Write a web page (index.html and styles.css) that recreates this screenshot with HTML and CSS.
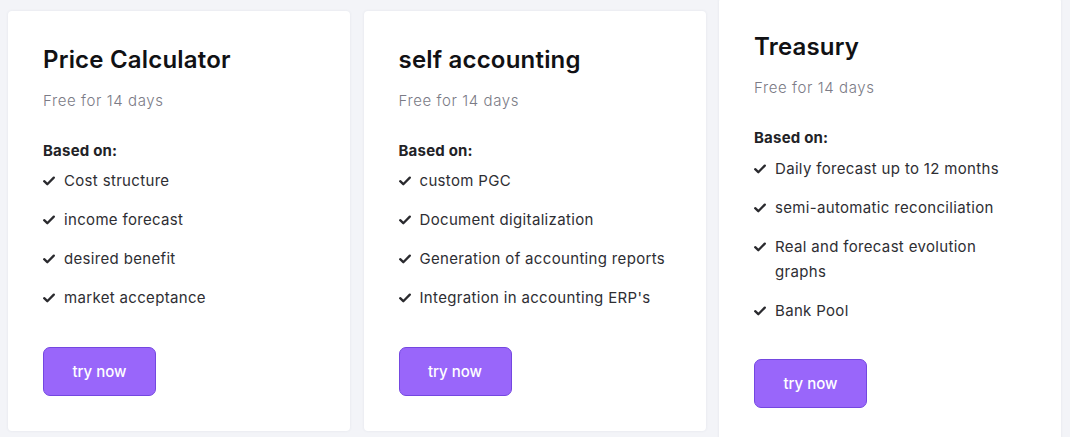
FILE: index.html
```html
<!DOCTYPE html>
<html>
<head>
<meta charset="utf-8">
<link rel="stylesheet" href="styles.css">
</head>
<body>
<div class="plans">
  <div class="card">
    <h2 class="title">Price Calculator</h2>
    <p class="sub">Free for 14 days</p>
    <p class="based">Based on:</p>
    <ul class="list">
      <li><svg class="chk" viewBox="0 0 12 10"><path d="M1.2 5.2 L4.3 8.2 L10.8 1.6"/></svg><span>Cost structure</span></li>
      <li><svg class="chk" viewBox="0 0 12 10"><path d="M1.2 5.2 L4.3 8.2 L10.8 1.6"/></svg><span>income forecast</span></li>
      <li><svg class="chk" viewBox="0 0 12 10"><path d="M1.2 5.2 L4.3 8.2 L10.8 1.6"/></svg><span>desired benefit</span></li>
      <li><svg class="chk" viewBox="0 0 12 10"><path d="M1.2 5.2 L4.3 8.2 L10.8 1.6"/></svg><span>market acceptance</span></li>
    </ul>
    <button class="btn">try now</button>
  </div>
  <div class="card">
    <h2 class="title">self accounting</h2>
    <p class="sub">Free for 14 days</p>
    <p class="based">Based on:</p>
    <ul class="list">
      <li><svg class="chk" viewBox="0 0 12 10"><path d="M1.2 5.2 L4.3 8.2 L10.8 1.6"/></svg><span>custom PGC</span></li>
      <li><svg class="chk" viewBox="0 0 12 10"><path d="M1.2 5.2 L4.3 8.2 L10.8 1.6"/></svg><span>Document digitalization</span></li>
      <li><svg class="chk" viewBox="0 0 12 10"><path d="M1.2 5.2 L4.3 8.2 L10.8 1.6"/></svg><span>Generation of accounting reports</span></li>
      <li><svg class="chk" viewBox="0 0 12 10"><path d="M1.2 5.2 L4.3 8.2 L10.8 1.6"/></svg><span>Integration in accounting ERP's</span></li>
    </ul>
    <button class="btn">try now</button>
  </div>
  <div class="card">
    <h2 class="title">Treasury</h2>
    <p class="sub">Free for 14 days</p>
    <p class="based">Based on:</p>
    <ul class="list">
      <li><svg class="chk" viewBox="0 0 12 10"><path d="M1.2 5.2 L4.3 8.2 L10.8 1.6"/></svg><span>Daily forecast up to 12 months</span></li>
      <li><svg class="chk" viewBox="0 0 12 10"><path d="M1.2 5.2 L4.3 8.2 L10.8 1.6"/></svg><span>semi-automatic reconciliation</span></li>
      <li><svg class="chk" viewBox="0 0 12 10"><path d="M1.2 5.2 L4.3 8.2 L10.8 1.6"/></svg><span>Real and forecast evolution graphs</span></li>
      <li><svg class="chk" viewBox="0 0 12 10"><path d="M1.2 5.2 L4.3 8.2 L10.8 1.6"/></svg><span>Bank Pool</span></li>
    </ul>
    <button class="btn">try now</button>
  </div>
</div>
</body>
</html>
```
FILE: styles.css
```css
* { box-sizing: border-box; }
html, body { margin: 0; padding: 0; }
body {
  background: #f3f4f8;
  font-family: "Inter", "Noto Sans", sans-serif;
  width: 1070px;
  height: 437px;
  overflow: hidden;
}
.plans {
  display: flex;
  align-items: center;
  gap: 13.5px;
  height: 437px;
  padding: 4px 0 0 8px;
}
.card {
  width: 342px;
  flex: none;
  background: #fff;
  border-radius: 4px;
  box-shadow: 0 0 3px rgba(40, 50, 90, 0.08);
  padding: 33px 35px 35px;
}
.title {
  margin: 0;
  font-size: 24px;
  line-height: 32px;
  font-weight: 600;
  color: #111114;
  letter-spacing: 0.2px;
}
.sub {
  margin: 13px 0 0;
  font-size: 15px;
  line-height: 24px;
  color: #7b7b86;
  font-weight: 300;
  letter-spacing: 0.6px;
}
.based {
  margin: 26px 0 0;
  font-size: 15px;
  line-height: 24px;
  font-weight: 700;
  color: #222226;
  letter-spacing: 0.2px;
}
.list {
  list-style: none;
  margin: 5.5px 0 0;
  padding: 0;
}
.list li {
  display: flex;
  align-items: flex-start;
  font-size: 15px;
  line-height: 25px;
  color: #2e2e33;
  margin-bottom: 14px;
  letter-spacing: 0.33px;
}
.list li:last-child { margin-bottom: 0; }
.chk {
  width: 12px;
  height: 10px;
  flex: none;
  margin: 8px 9px 0 0;
  fill: none;
  stroke: #2a2a2e;
  stroke-width: 2.3;
  stroke-linecap: round;
  stroke-linejoin: round;
}
.btn {
  display: block;
  margin-top: 36.5px;
  width: 113px;
  height: 49px;
  background: #9966fa;
  border: 1px solid #7447e0;
  border-radius: 7px;
  color: #fff;
  font-family: inherit;
  font-size: 15px;
  font-weight: 500;
  padding: 0;
}
```
